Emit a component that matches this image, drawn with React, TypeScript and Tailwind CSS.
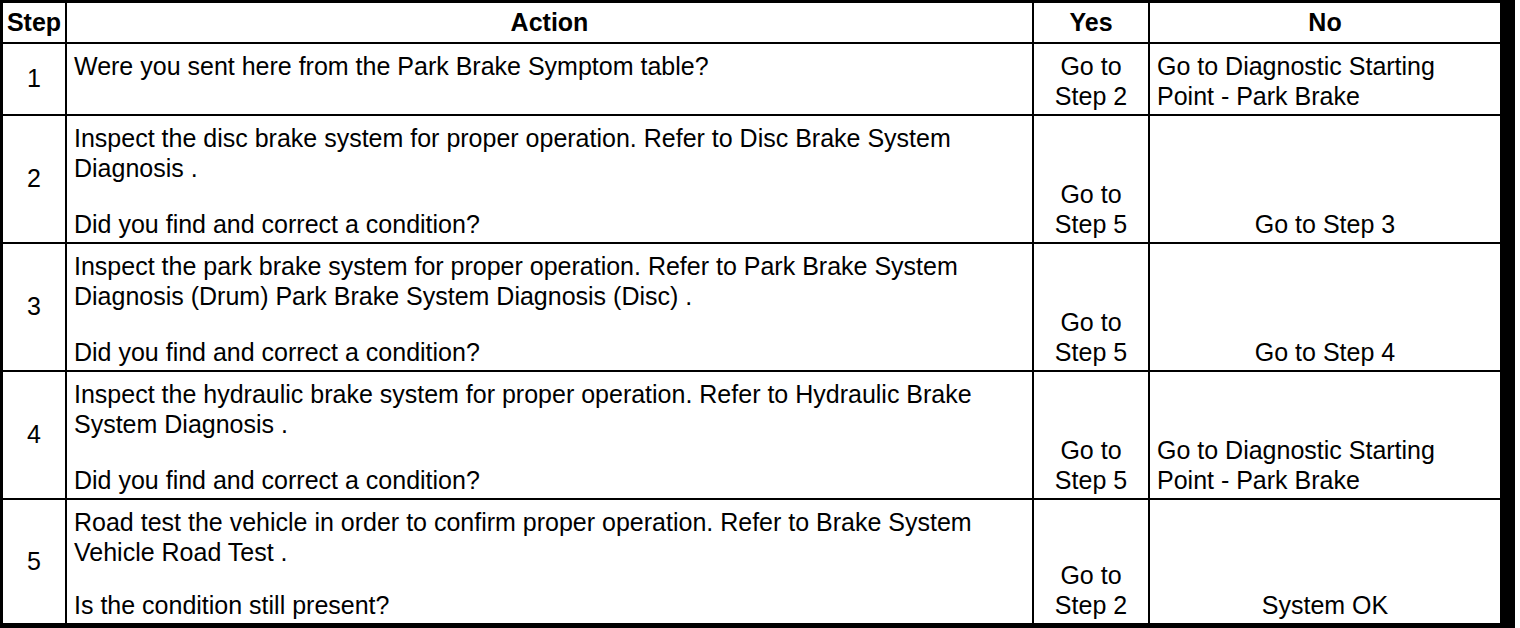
import React from "react";

type Row = {
  step: string;
  top: string[];
  bottom?: string;
  yes: string[];
  no: string[];
  noLeft?: boolean;
};

const rows: Row[] = [
  {
    step: "1",
    top: ["Were you sent here from the Park Brake Symptom table?"],
    yes: ["Go to", "Step 2"],
    no: ["Go to Diagnostic Starting", "Point - Park Brake"],
    noLeft: true,
  },
  {
    step: "2",
    top: [
      "Inspect the disc brake system for proper operation. Refer to Disc Brake System",
      "Diagnosis .",
    ],
    bottom: "Did you find and correct a condition?",
    yes: ["Go to", "Step 5"],
    no: ["Go to Step 3"],
  },
  {
    step: "3",
    top: [
      "Inspect the park brake system for proper operation. Refer to Park Brake System",
      "Diagnosis (Drum) Park Brake System Diagnosis (Disc) .",
    ],
    bottom: "Did you find and correct a condition?",
    yes: ["Go to", "Step 5"],
    no: ["Go to Step 4"],
  },
  {
    step: "4",
    top: [
      "Inspect the hydraulic brake system for proper operation. Refer to Hydraulic Brake",
      "System Diagnosis .",
    ],
    bottom: "Did you find and correct a condition?",
    yes: ["Go to", "Step 5"],
    no: ["Go to Diagnostic Starting", "Point - Park Brake"],
    noLeft: true,
  },
  {
    step: "5",
    top: [
      "Road test the vehicle in order to confirm proper operation. Refer to Brake System",
      "Vehicle Road Test .",
    ],
    bottom: "Is the condition still present?",
    yes: ["Go to", "Step 2"],
    no: ["System OK"],
  },
];

function Lines({ lines, center }: { lines: string[]; center?: boolean }) {
  return (
    <div className={center ? "w-full text-center" : "w-full text-left"}>
      {lines.map((l, i) => (
        <div key={i} className="h-[30px] leading-[30px] whitespace-pre">
          {l}
        </div>
      ))}
    </div>
  );
}

export default function App() {
  return (
    <div className="w-[1520px] h-[628px] bg-white">
      <div
        className="w-[1515px] h-[628px] bg-black grid grid-cols-[62px_965px_114px_350px] grid-rows-[39px_70px_126px_126px_126px_123px] gap-[2px] pl-[3px] pt-[3px] pr-[15px] pb-[5px] text-black text-[25px]"
        style={{ fontFamily: '"Liberation Sans", Arial, Helvetica, sans-serif' }}
      >
        <div className="bg-white flex items-center justify-center font-bold">Step</div>
        <div className="bg-white flex items-center justify-center font-bold">Action</div>
        <div className="bg-white flex items-center justify-center font-bold">Yes</div>
        <div className="bg-white flex items-center justify-center font-bold">No</div>
        {rows.map((r) => (
          <React.Fragment key={r.step}>
            <div className="bg-white flex items-center justify-center">{r.step}</div>
            <div className="bg-white pl-[7px] pt-[7px] pb-[3px] flex flex-col justify-between">
              <Lines lines={r.top} />
              {r.bottom ? <Lines lines={[r.bottom]} /> : null}
            </div>
            <div className="bg-white flex flex-col justify-end pb-[3px]">
              <Lines lines={r.yes} center />
            </div>
            <div
              className={
                r.noLeft
                  ? "bg-white flex flex-col justify-end pl-[7px] pb-[3px]"
                  : "bg-white flex flex-col justify-end pb-[3px]"
              }
            >
              <Lines lines={r.no} center={!r.noLeft} />
            </div>
          </React.Fragment>
        ))}
      </div>
    </div>
  );
}
